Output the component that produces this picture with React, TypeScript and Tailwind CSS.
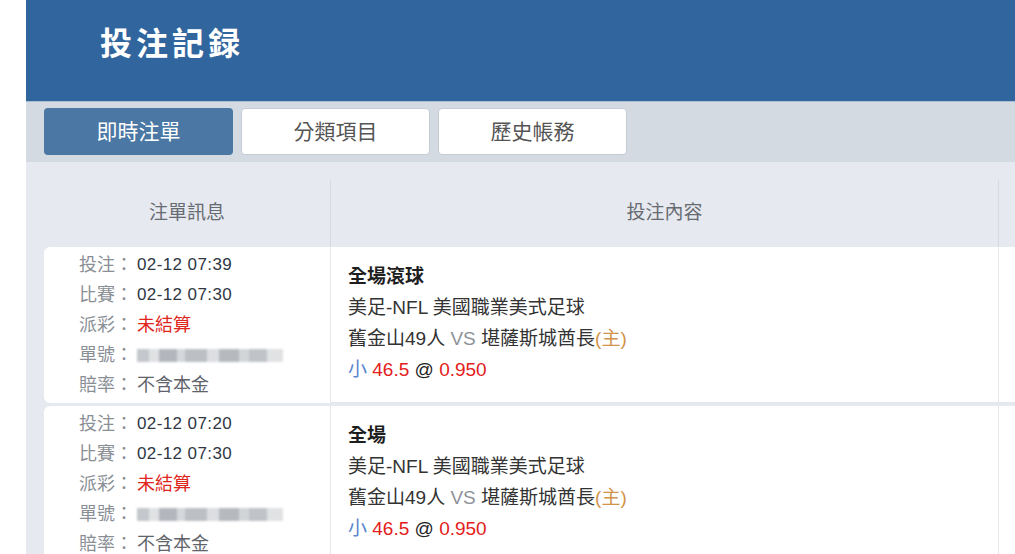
import React from "react";

interface Bet {
	placed: string;
	match: string;
	market: string;
}

const bets: Bet[] = [
	{ placed: "02-12 07:39", match: "02-12 07:30", market: "全場滾球" },
	{ placed: "02-12 07:20", match: "02-12 07:30", market: "全場" }
];

const tabs = ["即時注單", "分類項目", "歷史帳務"];

const cjk = { fontFamily: '"Liberation Sans", "Noto Sans CJK TC", sans-serif' };

const BlurredId = () => (
	<div className="flex h-[13px] w-[146px] items-center blur-[1px]">
		<span className="h-full w-[12px] bg-[#c4c7cc]" />
		<span className="h-full w-[10px] bg-[#dfe1e3]" />
		<span className="h-full w-[18px] bg-[#b3b7bd]" />
		<span className="h-full w-[8px] bg-[#d5d8db]" />
		<span className="h-full w-[22px] bg-[#bcc0c5]" />
		<span className="h-full w-[12px] bg-[#dcdee1]" />
		<span className="h-full w-[20px] bg-[#b6babf]" />
		<span className="h-full w-[10px] bg-[#d2d5d8]" />
		<span className="h-full w-[18px] bg-[#c0c3c8]" />
		<span className="h-full w-[16px] bg-[#e0e2e4]" />
	</div>
);

const InfoLine = ({ label, children }: { label: string; children: React.ReactNode }) => (
	<div className="flex h-[30px] items-center">
		<span className="w-[58px] text-[18px] text-[#8a8f96]">{label}</span>
		{children}
	</div>
);

const BetRow = ({ bet }: { bet: Bet }) => (
	<div className="flex">
		<div className="w-[286px] rounded-l-md bg-white pl-[35px] pt-[3px] pb-[3px] text-[17px]">
			<InfoLine label="投注：">
				<span className="tracking-[0.4px] text-[#2f3743]">{bet.placed}</span>
			</InfoLine>
			<InfoLine label="比賽：">
				<span className="tracking-[0.4px] text-[#2f3743]">{bet.match}</span>
			</InfoLine>
			<InfoLine label="派彩：">
				<span className="text-[18px] text-[#e0261d]">未結算</span>
			</InfoLine>
			<InfoLine label="單號：">
				<BlurredId />
			</InfoLine>
			<InfoLine label="賠率：">
				<span className="text-[18px] text-[#5f646b]">不含本金</span>
			</InfoLine>
		</div>
		<div className="w-[668px] border-b border-l border-[#e6e6e6] bg-white pl-[17px] pt-[14px] text-[19px] leading-[31px] text-[#333]">
			<div className="font-bold text-[#1e1e1e]">{bet.market}</div>
			<div>美足-NFL 美國職業美式足球</div>
			<div>
				舊金山49人 <span className="text-[#8d9299]">VS</span> 堪薩斯城酋長
				<span className="text-[#d1944a]">(主)</span>
			</div>
			<div>
				<span className="text-[#5a86cf]">小</span> <span className="text-[#e3201b]">46.5</span>{" "}
				<span className="text-[#222]">@</span> <span className="text-[#e3201b]">0.950</span>
			</div>
		</div>
		<div className="flex-1 border-b border-l border-[#e6e6e6] bg-white" />
	</div>
);

export default function App() {
	return (
		<div className="flex h-[554px] w-[1015px] overflow-hidden bg-white" style={cjk}>
			<div className="w-[26px] shrink-0 bg-white" />
			<div className="flex flex-1 flex-col bg-[#e6e9ef]">
				<div className="flex h-[101px] shrink-0 items-center bg-[#31659e] pl-[74px] pb-[14px]">
					<h1 className="text-[32px] font-bold tracking-[4px] text-white">投注記録</h1>
				</div>
				<div className="flex h-[61px] shrink-0 gap-2 border-t border-[#a9bed3] bg-[#d3dae2] pl-[18px] pt-[6px]">
					{tabs.map((tab, i) => (
						<div
							key={tab}
							className={
								i === 0
									? "flex h-[47px] w-[189px] items-center justify-center rounded bg-[#4a77a3] text-[21px] text-white"
									: "flex h-[47px] w-[189px] items-center justify-center rounded border border-[#c5ccd5] bg-white text-[21px] text-[#555]"
							}
						>
							{tab}
						</div>
					))}
				</div>
				<div className="flex flex-col pl-[18px] pt-[18px]">
					<div className="flex h-[67px] text-[19px] text-[#666b72]">
						<div className="flex w-[286px] items-center justify-center">注單訊息</div>
						<div className="flex w-[668px] items-center justify-center border-l border-[#d6d9de]">投注內容</div>
						<div className="flex-1 border-l border-[#d6d9de]" />
					</div>
					<div className="flex flex-col gap-[3px]">
						{bets.map((bet) => (
							<BetRow bet={bet} key={bet.placed} />
						))}
					</div>
				</div>
			</div>
		</div>
	);
}
